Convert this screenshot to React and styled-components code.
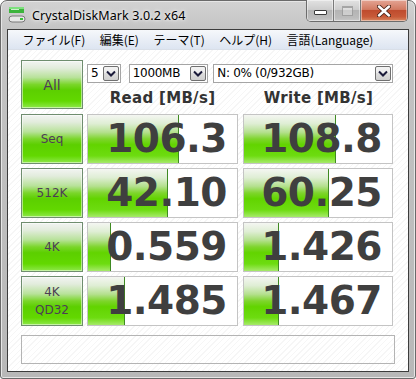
import React from "react";
import styled, { createGlobalStyle } from "styled-components";

const Global = createGlobalStyle`
  html, body { margin: 0; padding: 0; background: #ffffff; }
  body { width: 416px; height: 379px; overflow: hidden; font-family: "DejaVu Sans", Verdana, sans-serif; }
`;

const Win = styled.div`
  width: 416px;
  height: 379px;
  box-sizing: border-box;
  background: linear-gradient(180deg, #d2d2d2 0px, #c4c4c4 28px, #b8b8b8 100%);
  border: 1px solid #6a6a6a;
  border-radius: 7px 7px 3px 3px;
  display: flex;
  flex-direction: column;
  padding: 0 6px 6px 6px;
  box-shadow: inset 0 0 0 1px #e6e6e6;
`;

const TitleBar = styled.div`
  height: 28px;
  display: flex;
  align-items: flex-start;
  position: relative;
`;

const TitleIcon = styled.svg`
  margin: 5px 0 0 1px;
  flex: none;
`;

const TitleText = styled.div`
  font-family: "Noto Sans", "Open Sans", sans-serif;
  font-size: 12.5px;
  color: #000;
  margin: 6px 0 0 6px;
  letter-spacing: 0.1px;
  text-shadow: 0 0 6px rgba(255,255,255,0.9), 0 0 3px rgba(255,255,255,0.9);
`;

const Caption = styled.div`
  position: absolute;
  right: 1px;
  top: -1px;
  display: flex;
  height: 21px;
  border: 1px solid #6c6c6c;
  border-top: none;
  border-radius: 0 0 5px 5px;
  overflow: hidden;
`;

const CapBtn = styled.div`
  width: ${(p) => p.$w}px;
  height: 100%;
  display: flex;
  align-items: center;
  justify-content: center;
  border-left: ${(p) => (p.$first ? "none" : "1px solid #7a7a7a")};
  background: ${(p) =>
    p.$close
      ? "linear-gradient(180deg, #e4a594 0%, #d27a62 45%, #bf4c2e 50%, #c85a38 80%, #d88860 100%)"
      : "linear-gradient(180deg, #e2e2e2 0%, #cdcdcd 45%, #b4b4b4 50%, #bcbcbc 85%, #cacaca 100%)"};
  box-shadow: inset 0 0 0 1px rgba(255,255,255,0.45);
`;

const MinGlyph = styled.div`
  width: 11px;
  height: 3px;
  margin-top: 4px;
  background: #fff;
  border: 1px solid #3a3a3a;
  border-radius: 1px;
`;

const MaxGlyph = styled.div`
  width: 9px;
  height: 7px;
  border: 1px solid #9a9a9a;
  border-top-width: 2px;
  background: rgba(255,255,255,0.4);
  opacity: 0.8;
`;

const Inner = styled.div`
  flex: 1;
  display: flex;
  flex-direction: column;
  border: 1px solid #3c3c3c;
  background: #fff;
`;

const MenuBar = styled.div`
  height: 19px;
  display: flex;
  align-items: center;
  padding-left: 7px;
  background: linear-gradient(180deg, #f6f8fb 0%, #e9eef6 50%, #dde5f1 100%);
  border-bottom: 1px solid #d9dfe8;
`;

const MenuItem = styled.div`
  font-family: "Noto Sans CJK JP", "Noto Sans", sans-serif;
  font-size: 12px;
  color: #000;
  padding: 0 7px 0 7.5px;
  line-height: 19px;
`;

const Client = styled.div`
  flex: 1;
  padding: 10px 14px 0 13px;
  background-color: #ffffff;
  background-image: repeating-linear-gradient(
    135deg,
    rgba(0, 0, 0, 0.035) 0px,
    rgba(0, 0, 0, 0.035) 1px,
    transparent 1px,
    transparent 4px
  );
`;

const Grid = styled.div`
  display: grid;
  grid-template-columns: 62px 151px 151px;
  column-gap: 4px;
  grid-auto-rows: auto;
`;

const TopArea = styled.div`
  grid-column: 2 / 4;
  display: flex;
  flex-direction: column;
`;

const SelectRow = styled.div`
  display: flex;
  margin-top: 4px;
  height: 19px;
`;

const Select = styled.div`
  width: ${(p) => p.$w}px;
  margin-right: ${(p) => p.$mr}px;
  box-sizing: border-box;
  height: 19px;
  border: 1px solid #a5a5a5;
  background: #fff;
  display: flex;
  align-items: stretch;
`;

const SelectText = styled.div`
  flex: 1;
  font-family: "DejaVu Sans", Verdana, sans-serif;
  font-size: 12px;
  line-height: 17px;
  padding-left: 3px;
  color: #000;
  white-space: nowrap;
  overflow: hidden;
  letter-spacing: -0.3px;
`;

const SelectBtn = styled.div`
  width: 16px;
  margin: 1px;
  box-sizing: border-box;
  border: 1px solid #707070;
  border-radius: 2px;
  background: linear-gradient(180deg, #f2f2f2 0%, #ebebeb 50%, #dddddd 50%, #cfcfcf 100%);
  display: flex;
  align-items: center;
  justify-content: center;
`;

const Headers = styled.div`
  display: grid;
  grid-template-columns: 151px 151px;
  column-gap: 5px;
  margin-top: 5px;
  margin-bottom: 5px;
`;

const Header = styled.div`
  text-align: center;
  font-family: "DejaVu Sans", Verdana, sans-serif;
  font-weight: bold;
  font-size: 15px;
  line-height: 20px;
  color: #333333;
  letter-spacing: 0.3px;
`;

const GreenBtn = styled.div`
  box-sizing: border-box;
  height: ${(p) => p.$h}px;
  border: 1px solid #6f8d6f;
  background: linear-gradient(
    180deg,
    #f2f4f2 0%,
    #e2ecdc 15%,
    #b8e29a 35%,
    #7ad62a 50%,
    #5ccf00 62%,
    #62d800 85%,
    #8ee84a 100%
  );
  box-shadow: inset 0 0 0 1px rgba(255, 255, 255, 0.5);
  display: flex;
  align-items: center;
  justify-content: center;
  text-align: center;
  font-family: "DejaVu Sans", Verdana, sans-serif;
  font-size: ${(p) => (p.$big ? 14 : 12)}px;
  line-height: 18px;
  color: #4d3d55;
  margin-bottom: ${(p) => p.$mb}px;
`;

const Label = styled.span`
  white-space: pre-line;
`;

const ValueBox = styled.div`
  position: relative;
  box-sizing: border-box;
  height: 50px;
  border: 1px solid #c4c4c4;
  background: #fff;
  margin-bottom: ${(p) => p.$mb}px;
  margin-left: ${(p) => p.$ml}px;
  overflow: hidden;
`;

const Fill = styled.div`
  position: absolute;
  left: 0;
  top: 0;
  bottom: 0;
  border-right: 1px solid #3f8a22;
  background: linear-gradient(
    180deg,
    #f4f6f2 0%,
    #dfeed4 18%,
    #b4e08e 36%,
    #7ed52c 50%,
    #62d400 62%,
    #6ddc10 85%,
    #a6ea6a 100%
  );
`;

const Value = styled.div`
  position: relative;
  text-align: right;
  padding-right: 10px;
  font-family: "DejaVu Sans", Verdana, sans-serif;
  font-weight: bold;
  font-size: 39px;
  line-height: 48px;
  color: #3f3f3f;
  letter-spacing: -0.5px;
`;

const Comment = styled.div`
  margin-top: 5px;
  height: 29px;
  box-sizing: border-box;
  border: 1px solid #b4b4b4;
  background: transparent;
  width: 374px;
`;

const Chevron = () => (
  <svg width="10" height="7" viewBox="0 0 10 7">
    <path d="M1 1.5 L5 5.5 L9 1.5" fill="none" stroke="#1a1a3a" strokeWidth="2" />
  </svg>
);

const rows = [
  { label: "Seq", r: "106.3", w: "108.8", rf: 90, wf: 91 },
  { label: "512K", r: "42.10", w: "60.25", rf: 79, wf: 84 },
  { label: "4K", r: "0.559", w: "1.426", rf: 22, wf: 34 },
  { label: "4K\nQD32", r: "1.485", w: "1.467", rf: 36, wf: 34 },
];

export default function App() {
  return (
    <>
      <Global />
      <Win>
        <TitleBar>
          <TitleIcon width="18" height="18" viewBox="0 0 18 18">
            <rect x="1" y="1" width="15" height="6" fill="#3cb43c" />
            <rect x="1" y="1" width="15" height="2" fill="#7ee07e" />
            <rect x="3" y="3" width="8" height="1" fill="#cfeecf" />
            <rect x="1" y="10" width="16" height="6" rx="3" fill="#e8e8e8" stroke="#7a7a7a" strokeWidth="1" />
            <rect x="12" y="12" width="3" height="2" fill="#38c038" />
          </TitleIcon>
          <TitleText>CrystalDiskMark 3.0.2 x64</TitleText>
          <Caption>
            <CapBtn $w={26} $first>
              <MinGlyph />
            </CapBtn>
            <CapBtn $w={26}>
              <MaxGlyph />
            </CapBtn>
            <CapBtn $w={46} $close>
              <svg width="14" height="12" viewBox="0 0 14 12">
                <path
                  d="M2 1.5 L12 10.5 M12 1.5 L2 10.5"
                  stroke="#4a2418"
                  strokeWidth="4.2"
                  strokeLinecap="round"
                />
                <path
                  d="M2 1.5 L12 10.5 M12 1.5 L2 10.5"
                  stroke="#ffffff"
                  strokeWidth="2.4"
                  strokeLinecap="round"
                />
              </svg>
            </CapBtn>
          </Caption>
        </TitleBar>
        <Inner>
          <MenuBar>
            <MenuItem>ファイル(F)</MenuItem>
            <MenuItem>編集(E)</MenuItem>
            <MenuItem>テーマ(T)</MenuItem>
            <MenuItem>ヘルプ(H)</MenuItem>
            <MenuItem>言語(Language)</MenuItem>
          </MenuBar>
          <Client>
            <Grid>
              <GreenBtn $h={49} $big $mb={5}>All</GreenBtn>
              <TopArea>
                <SelectRow>
                  <Select $w={34} $mr={8}>
                    <SelectText>5</SelectText>
                    <SelectBtn><Chevron /></SelectBtn>
                  </Select>
                  <Select $w={80} $mr={5}>
                    <SelectText>1000MB</SelectText>
                    <SelectBtn><Chevron /></SelectBtn>
                  </Select>
                  <Select $w={181} $mr={0}>
                    <SelectText>N: 0% (0/932GB)</SelectText>
                    <SelectBtn><Chevron /></SelectBtn>
                  </Select>
                </SelectRow>
                <Headers>
                  <Header>Read [MB/s]</Header>
                  <Header>Write [MB/s]</Header>
                </Headers>
              </TopArea>
              {rows.map((row) => (
                <React.Fragment key={row.label}>
                  <GreenBtn $h={50} $mb={4}>
                    <Label>{row.label}</Label>
                  </GreenBtn>
                  <ValueBox $mb={4} $ml={0}>
                    <Fill style={{ width: `${row.rf}px` }} />
                    <Value>{row.r}</Value>
                  </ValueBox>
                  <ValueBox $mb={4} $ml={1}>
                    <Fill style={{ width: `${row.wf}px` }} />
                    <Value>{row.w}</Value>
                  </ValueBox>
                </React.Fragment>
              ))}
            </Grid>
            <Comment />
          </Client>
        </Inner>
      </Win>
    </>
  );
}
